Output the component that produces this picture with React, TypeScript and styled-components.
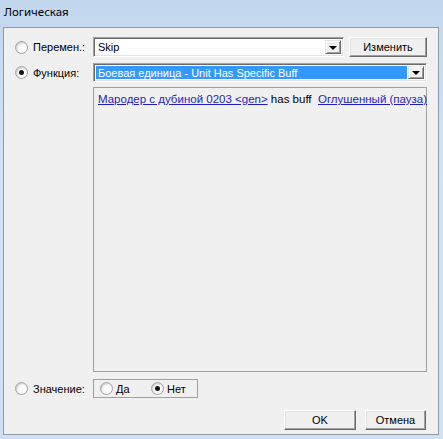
import React from "react";
import styled, { createGlobalStyle } from "styled-components";

const Global = createGlobalStyle`
  html, body { margin: 0; padding: 0; background: #cfe0f3; }
  body { font-family: "Liberation Sans", Arial, sans-serif; }
`;

const Window = styled.div`
  width: 443px;
  height: 439px;
  display: flex;
  flex-direction: column;
  background: linear-gradient(180deg, #c2d7ee 0%, #d3e3f4 40%, #cfe0f3 100%);
  box-sizing: border-box;
  overflow: hidden;
`;

const TitleBar = styled.div`
  height: 27px;
  flex: none;
  display: flex;
  align-items: center;
  padding: 0 0 4px 4px;
  box-sizing: border-box;
  font-family: "Noto Sans", "Open Sans", sans-serif;
  font-size: 11.5px;
  color: #000;
`;

const Client = styled.div`
  margin: 0 4px 4px 3px;
  height: 408px;
  box-sizing: border-box;
  border: 1px solid #8e9aa8;
  background: #f0f0f0;
  display: flex;
  flex-direction: column;
  font-family: "Liberation Sans", Arial, sans-serif;
  font-size: 11px;
  color: #000;
`;

const Row = styled.div<{ $mt: number; $h: number }>`
  display: flex;
  align-items: center;
  margin-top: ${(p) => p.$mt}px;
  height: ${(p) => p.$h}px;
  flex: none;
`;

const LabelCell = styled.label`
  width: 89px;
  flex: none;
  display: flex;
  align-items: center;
  gap: 5px;
  padding-left: 11px;
  box-sizing: border-box;
  height: 100%;
`;

const Radio = styled.span<{ $on?: boolean }>`
  width: 13px;
  height: 13px;
  flex: none;
  box-sizing: border-box;
  border-radius: 50%;
  border: 1px solid #a2a2a2;
  background: radial-gradient(circle at 60% 60%, #ffffff 30%, #e8e8e8 75%, #d6d6d6 100%);
  box-shadow: inset 1px 1px 1px rgba(0, 0, 0, 0.12);
  display: flex;
  align-items: center;
  justify-content: center;
  &::after {
    content: "";
    display: ${(p) => (p.$on ? "block" : "none")};
    width: 5px;
    height: 5px;
    border-radius: 50%;
    background: #141414;
  }
`;

const Combo = styled.div<{ $w: number }>`
  width: ${(p) => p.$w}px;
  height: 100%;
  flex: none;
  box-sizing: border-box;
  border: 1px solid;
  border-color: #a0a0a0 #ffffff #ffffff #a0a0a0;
  box-shadow: inset 1px 1px 0 #696969, inset -1px -1px 0 #e3e3e3;
  background: #fff;
  display: flex;
  align-items: stretch;
  padding: 2px;
`;

const ComboText = styled.div<{ $sel?: boolean }>`
  flex: 1;
  display: flex;
  align-items: center;
  padding-left: 2px;
  margin-right: 1px;
  background: ${(p) => (p.$sel ? "#3399ff" : "transparent")};
  color: ${(p) => (p.$sel ? "#fff" : "#000")};
  white-space: nowrap;
  overflow: hidden;
`;

const DropBtn = styled.div`
  width: 16px;
  flex: none;
  box-sizing: border-box;
  background: #f0f0f0;
  border: 1px solid;
  border-color: #e3e3e3 #696969 #696969 #e3e3e3;
  box-shadow: inset 1px 1px 0 #fff, inset -1px -1px 0 #a0a0a0;
  display: flex;
  align-items: center;
  justify-content: center;
  &::after {
    content: "";
    border-left: 4px solid transparent;
    border-right: 4px solid transparent;
    border-top: 4px solid #000;
    margin-top: 1px;
  }
`;

const Button = styled.button<{ $w: number }>`
  width: ${(p) => p.$w}px;
  height: 100%;
  box-sizing: border-box;
  padding: 0;
  font: inherit;
  color: #000;
  background: #f0f0f0;
  border: 1px solid;
  border-color: #ffffff #696969 #696969 #ffffff;
  box-shadow: inset -1px -1px 0 #a0a0a0, inset 1px 1px 0 #e3e3e3;
  flex: none;
`;

const ContentBox = styled.div`
  margin-left: 89px;
  width: 334px;
  height: 100%;
  box-sizing: border-box;
  border: 1px solid #a0a0a0;
  background: #f0f0f0;
  padding: 5px 4px;
  white-space: pre;
  font-size: 11.5px;
`;

const Link = styled.a`
  color: #1f1fbf;
  text-decoration: underline;
`;

const GroupBox = styled.div`
  width: 105px;
  height: 100%;
  box-sizing: border-box;
  border: 1px solid #a0a0a0;
  display: flex;
  align-items: center;
  padding-left: 6px;
`;

const Option = styled.label<{ $w: number }>`
  width: ${(p) => p.$w}px;
  display: flex;
  align-items: center;
  gap: 3px;
`;

const Footer = styled.div`
  margin-top: 12px;
  height: 20px;
  display: flex;
  justify-content: flex-end;
  gap: 9px;
  padding-right: 12px;
`;

export default function App() {
  return (
    <>
      <Global />
      <Window>
        <TitleBar>Логическая</TitleBar>
        <Client>
          <Row $mt={9} $h={20}>
            <LabelCell>
              <Radio />
              Перемен.:
            </LabelCell>
            <Combo $w={251}>
              <ComboText>Skip</ComboText>
              <DropBtn />
            </Combo>
            <Button $w={78} style={{ marginLeft: 5 }}>
              Изменить
            </Button>
          </Row>
          <Row $mt={6} $h={19}>
            <LabelCell>
              <Radio $on />
              Функция:
            </LabelCell>
            <Combo $w={334}>
              <ComboText $sel>Боевая единица - Unit Has Specific Buff</ComboText>
              <DropBtn />
            </Combo>
          </Row>
          <Row $mt={5} $h={285}>
            <ContentBox>
              <Link>Мародер с дубиной 0203 &lt;gen&gt;</Link>
              {" has buff  "}
              <Link>Оглушенный (пауза)</Link>
            </ContentBox>
          </Row>
          <Row $mt={7} $h={19}>
            <LabelCell>
              <Radio />
              Значение:
            </LabelCell>
            <GroupBox>
              <Option $w={51}>
                <Radio />
                Да
              </Option>
              <Option $w={45}>
                <Radio $on />
                Нет
              </Option>
            </GroupBox>
          </Row>
          <Footer>
            <Button $w={72}>OK</Button>
            <Button $w={61}>Отмена</Button>
          </Footer>
        </Client>
      </Window>
    </>
  );
}
